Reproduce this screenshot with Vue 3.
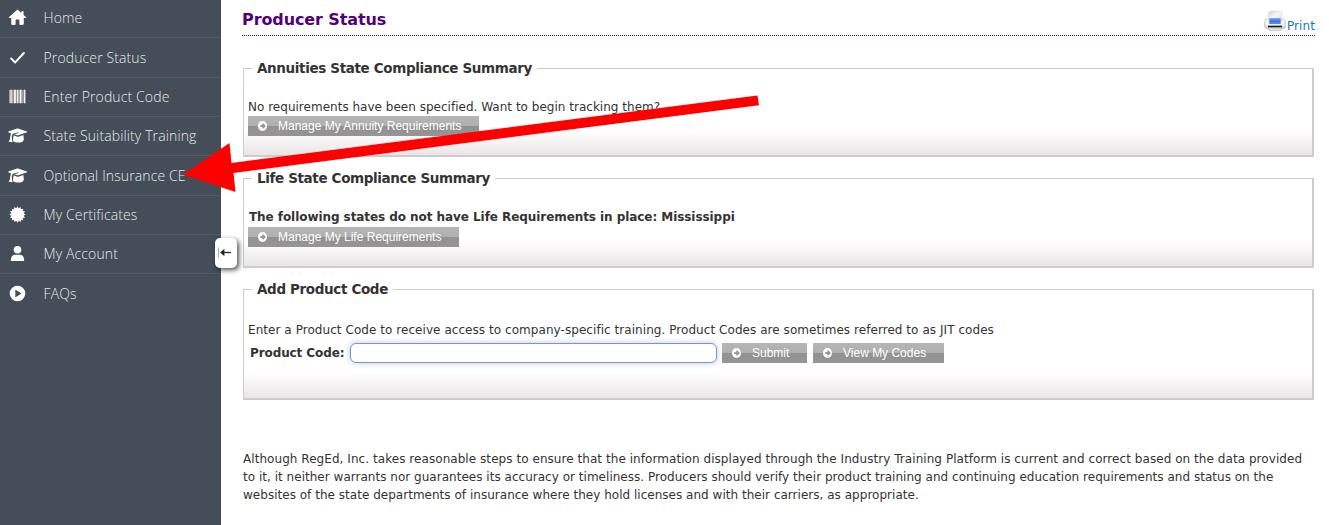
<script setup>
const menu = [
  { label: 'Home', icon: 'home' },
  { label: 'Producer Status', icon: 'check' },
  { label: 'Enter Product Code', icon: 'barcode' },
  { label: 'State Suitability Training', icon: 'cap' },
  { label: 'Optional Insurance CE', icon: 'cap' },
  { label: 'My Certificates', icon: 'seal' },
  { label: 'My Account', icon: 'user' },
  { label: 'FAQs', icon: 'play' },
]

const sealPoints = Array.from({ length: 32 }, (_, i) => {
  const r = i % 2 ? 6.6 : 8.6
  const a = (i * Math.PI) / 16
  return `${(10 + r * Math.sin(a)).toFixed(2)},${(10 - r * Math.cos(a)).toFixed(2)}`
}).join(' ')
</script>

<template>
  <div class="page">
    <aside class="sidebar">
      <nav class="menu">
        <a v-for="item in menu" :key="item.label" class="menu-item">
          <svg class="menu-icon" viewBox="0 0 20 20" fill="#fff">
            <path v-if="item.icon === 'home'" d="M10 1.7 .9 9.7Q.6 10.6 1.7 10.6H3.4V16.6Q3.4 17.8 4.6 17.8H7.1Q8 17.8 8 16.8V12.9Q8 12 8.9 12H11.1Q12 12 12 12.9V16.8Q12 17.8 12.9 17.8H15.4Q16.6 17.8 16.6 16.6V10.6H18.3Q19.4 10.6 19.1 9.7L16.4 7.3V3.5H14.1V5.3Z" />
            <path v-else-if="item.icon === 'check'" d="M3.3 11 7.6 15.2 16.7 5.3" fill="none" stroke="#fff" stroke-width="2.1" stroke-linecap="round" stroke-linejoin="round" />
            <g v-else-if="item.icon === 'barcode'">
              <path d="M2.3 3H18V17H2.3Z" opacity=".42" />
              <path d="M1.6 3H2.7V17H1.6ZM3.6 3H4.4V17H3.6ZM6.5 3H8.2V17H6.5ZM9.7 3H10.8V17H9.7ZM12.5 3H14V17H12.5ZM17 3H18.3V17H17Z" />
            </g>
            <g v-else-if="item.icon === 'cap'">
              <path d="M10.4 2.6 20 5.8Q20.5 6.2 20 6.6L10.8 9.8Q10.2 9.9 9.6 9.7L6.8 8.7 11.1 7.3Q11.4 6.4 10.7 6.5L5.4 8.1Q4 9 3.8 11.1 4.6 11.9 4 12.6L4.7 17.2 .6 16.6Q2.3 14.3 2.4 12.5 1.7 11.9 2.4 11.1 2.5 9.2 3.4 7.8L.3 6.6Q-.1 6.2.4 5.8L9.5 2.7Q10 2.5 10.4 2.6Z" />
              <path d="M5.8 9.7 9.2 11Q10.4 11.4 11.6 11L16.2 9.4 16.7 14.4Q15.8 17.4 10.5 17.4 7.4 17.3 5.2 16Z" />
            </g>
            <polygon v-else-if="item.icon === 'seal'" :points="sealPoints" />
            <g v-else-if="item.icon === 'user'">
              <circle cx="10" cy="6" r="4" />
              <path d="M3 18Q2.9 11.6 7.3 11.4H12.7Q17.1 11.6 17 18Z" />
            </g>
            <path v-else fill-rule="evenodd" d="M10 1.8A8.2 8.2 0 1 1 10 18.2A8.2 8.2 0 1 1 10 1.8ZM7.7 6.7V13.3Q7.7 14 8.4 13.7L13.5 10.6Q14 10 13.5 9.5L8.4 6.3Q7.8 6 7.7 6.7Z" />
          </svg>
          <span>{{ item.label }}</span>
        </a>
      </nav>
      <button class="collapse" aria-label="Collapse menu">
        <svg width="22" height="30" viewBox="0 0 22 30">
          <path d="M3.5 9.5V19.5" stroke="#aaa" />
          <path d="M6 14.5H16" stroke="#222" stroke-width="1.3" />
          <path d="M5.2 14.5 9.4 10.8V18.2Z" fill="#222" />
        </svg>
      </button>
    </aside>

    <main class="content">
      <header class="head">
        <h1>Producer Status</h1>
        <a class="print">
          <svg width="22" height="22" viewBox="0 0 22 22">
            <defs>
              <linearGradient id="body" x2="0" y2="1"><stop stop-color="#fafafa" /><stop offset=".6" stop-color="#eee" /><stop offset="1" stop-color="#c4c4c4" /></linearGradient>
              <linearGradient id="sheet" x2="1" y2="1"><stop stop-color="#d0d0d0" /><stop offset=".5" stop-color="#f7f7f7" /><stop offset="1" stop-color="#ddd" /></linearGradient>
              <linearGradient id="screen" x2="0" y2="1"><stop stop-color="#8ab0f2" /><stop offset=".5" stop-color="#3d72dc" /><stop offset="1" stop-color="#5694ee" /></linearGradient>
            </defs>
            <path d="M3 9 1.2 10Q.5 12 .5 16Q.6 18.4 3 18.8H19Q21.4 18.4 21.5 16Q21.5 12 20.8 10L19 9Z" fill="url(#body)" stroke="#bbb" stroke-width=".7" />
            <path d="M6 1H18V11H4V3.5Z" fill="url(#sheet)" stroke="#ddd" stroke-width=".5" />
            <rect x="5.3" y="8" width="11.4" height="6" fill="url(#screen)" />
            <rect x="4" y="15.7" width="14" height="1.6" fill="#181818" />
            <path d="M4.5 18H17.5L16.8 20.7H5.2Z" fill="#e2e2e2" stroke="#aaa" stroke-width=".5" />
          </svg>
          <span>Print</span>
        </a>
      </header>

      <fieldset class="panel annuities">
        <legend>Annuities State Compliance Summary</legend>
        <p class="note">No requirements have been specified. Want to begin tracking them?</p>
        <button class="btn w231"><i class="dot"><svg viewBox="0 0 10 10"><path d="M2.5 5H7M5 2.6 7.4 5 5 7.4" /></svg></i><span>Manage My Annuity Requirements</span></button>
      </fieldset>

      <fieldset class="panel life">
        <legend>Life State Compliance Summary</legend>
        <p class="note strong">The following states do not have Life Requirements in place: Mississippi</p>
        <button class="btn w211"><i class="dot"><svg viewBox="0 0 10 10"><path d="M2.5 5H7M5 2.6 7.4 5 5 7.4" /></svg></i><span>Manage My Life Requirements</span></button>
      </fieldset>

      <fieldset class="panel product">
        <legend>Add Product Code</legend>
        <p class="note">Enter a Product Code to receive access to company-specific training. Product Codes are sometimes referred to as JIT codes</p>
        <div class="form">
          <label for="code">Product Code:</label>
          <input id="code" type="text" />
          <button class="btn w85"><i class="dot"><svg viewBox="0 0 10 10"><path d="M2.5 5H7M5 2.6 7.4 5 5 7.4" /></svg></i><span>Submit</span></button>
          <button class="btn w131"><i class="dot"><svg viewBox="0 0 10 10"><path d="M2.5 5H7M5 2.6 7.4 5 5 7.4" /></svg></i><span>View My Codes</span></button>
        </div>
      </fieldset>

      <p class="legal">
        <span class="first">Although RegEd, Inc. takes reasonable steps to ensure that the information displayed through the Industry Training Platform is current and correct based on the data provided</span><br />
        <span>to it, it neither warrants nor guarantees its accuracy or timeliness. Producers should verify their product training and continuing education requirements and status on the</span><br />
        <span>websites of the state departments of insurance where they hold licenses and with their carriers, as appropriate.</span>
      </p>
    </main>

    <svg class="pointer" width="1329" height="525" viewBox="0 0 1329 525">
      <path d="M183 174.5 229.5 143 231.5 163 757.5 95.5 759 105.2 233.5 173 235.5 192Z" fill="#f00" />
    </svg>
  </div>
</template>

<style>
body {
  margin: 0;
  overflow: hidden;
}
</style>

<style scoped>
.page {
  position: relative;
  display: flex;
  width: 1329px;
  height: 525px;
  overflow: hidden;
  background: #fff;
  color: #333;
  font-family: "DejaVu Sans", Verdana, sans-serif;
  font-size: 12px;
}
.sidebar {
  position: relative;
  flex: 0 0 221px;
  background: #444d58;
}
.menu {
  margin-top: -1px;
}
.menu-item {
  display: flex;
  align-items: center;
  box-sizing: border-box;
  height: 39px;
  padding: 0 0 1px 8px;
  border-bottom: 1px solid #4e5c68;
  color: #e6e9ec;
  font: 300 14px "Open Sans", sans-serif;
  letter-spacing: .12px;
}
.menu-item:nth-child(3n + 2) {
  height: 40px;
  padding-bottom: 0;
}
.menu-item:last-child {
  border-bottom-color: transparent;
}
.menu-icon {
  width: 19px;
  height: 19px;
  margin-right: 16.5px;
  overflow: visible;
}
.collapse {
  position: absolute;
  left: 215px;
  top: 238px;
  width: 22px;
  height: 30px;
  padding: 0;
  border: 0;
  border-radius: 5px;
  background: #fff;
  box-shadow: 2px 2px 5px rgba(0, 0, 0, .7);
}
.collapse svg {
  display: block;
}
.content {
  flex: 0 0 1073px;
  margin-left: 21px;
}
.head {
  display: flex;
  justify-content: space-between;
  align-items: flex-start;
  box-sizing: border-box;
  height: 36px;
  border-bottom: 1px dotted #4b0082;
}
h1 {
  margin: 10px 0 0;
  color: #520079;
  font-size: 16px;
  line-height: 20px;
  letter-spacing: -.1px;
}
.print {
  display: flex;
  align-items: flex-start;
  gap: 1px;
  margin-top: 10px;
  color: #1b75bc;
}
.print span {
  margin-top: 8px;
  line-height: 16px;
  letter-spacing: .1px;
}
.panel {
  box-sizing: border-box;
  width: 1071px;
  margin: 0 0 0 1px;
  padding: 0 0 0 4px;
  border: solid #ccc;
  border-width: 1px 2px 2px 1px;
  background: linear-gradient(#fff, #fdfbfc 20%, #e8e6e7) bottom / 100% 27px no-repeat;
}
legend {
  height: 20px;
  margin-left: 4px;
  padding: 0 5px;
  font-size: 13.5px;
  font-weight: bold;
  line-height: 20px;
  letter-spacing: -.36px;
}
.annuities {
  height: 99px;
  margin-top: 22px;
}
.life {
  height: 100px;
  margin-top: 11px;
}
.product {
  height: 121px;
  margin-top: 11px;
}
.note {
  margin: 20px 0 0;
  line-height: 18px;
  letter-spacing: .015px;
}
.note.strong {
  margin: 20px 0 1px 1px;
  font-weight: bold;
  letter-spacing: -.065px;
}
.product .note {
  margin-top: 22px;
  letter-spacing: .055px;
}
.btn {
  display: flex;
  align-items: center;
  height: 20px;
  padding: 0 0 0 10px;
  border: 0;
  background: linear-gradient(#b5b5b5 0, #b0b0b0 48%, #929292 52%, #959595 100%);
  color: #fff;
  font: 12px "Liberation Sans", Arial, sans-serif;
}
.dot {
  display: flex;
  width: 9px;
  height: 10px;
  margin-right: 11px;
  border-radius: 50%;
  background: #fff;
}
.dot svg {
  width: 9px;
  height: 10px;
  fill: none;
  stroke: #999;
  stroke-width: 2;
}
.w231 { width: 231px; }
.w211 { width: 211px; }
.w85 { width: 85px; }
.w131 { width: 131px; }
.form {
  display: flex;
  align-items: center;
  margin: 4px 0 0 2px;
}
label {
  width: 100px;
  font-weight: bold;
  letter-spacing: -.1px;
}
input {
  box-sizing: border-box;
  width: 367px;
  height: 20px;
  margin: 0 5px 0 0;
  border: 1px solid #8193c0;
  border-radius: 6px;
  background: #fff;
  box-shadow: 0 0 6px rgba(100, 130, 200, .45);
}
.w85 {
  margin-right: 6px;
}
.legal {
  margin: 50px 0 0 1px;
  line-height: 18px;
  letter-spacing: .022px;
  white-space: nowrap;
}
.legal .first {
  letter-spacing: .055px;
}
.pointer {
  position: absolute;
  left: 0;
  top: 0;
  pointer-events: none;
}
</style>
